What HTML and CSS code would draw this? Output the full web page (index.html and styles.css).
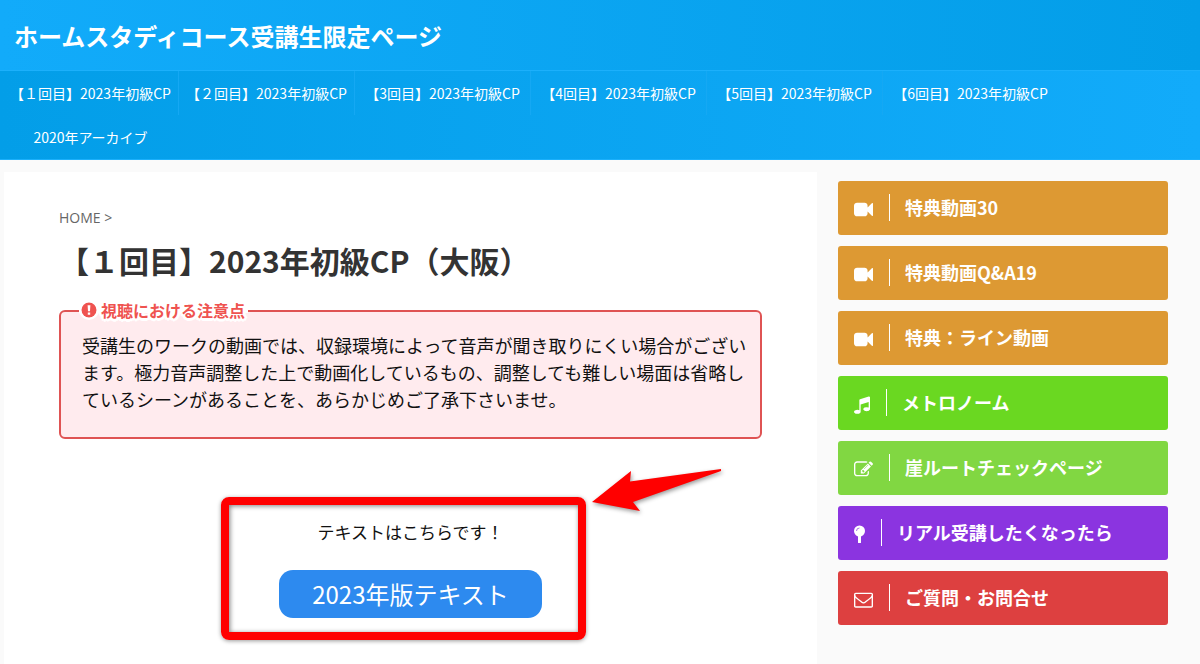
FILE: index.html
```html
<!DOCTYPE html>
<html lang="ja">

<head>
    <meta charset="utf-8">
    <meta content="width=device-width, initial-scale=1" name="viewport" />
    <title>ホームスタディコース受講生限定ページ</title>
    <link rel="stylesheet" href="styles.css">
</head>

<body>
    <!-- icons used more than once -->
    <svg class="sprite" aria-hidden="true">
        <symbol id="video" viewBox="0 0 1792 1792">
            <path d="M1792 352v1088q0 42-39 59-13 5-25 5-27 0-45-19l-403-403v166q0 119-84.5 203.5t-203.5 84.5h-704q-119 0-203.5-84.5t-84.5-203.5v-704q0-119 84.5-203.5t203.5-84.5h704q119 0 203.5 84.5t84.5 203.5v165l403-402q18-19 45-19 12 0 25 5 39 17 39 59z" />
        </symbol>
    </svg>

    <header class="header">
        <a class="site-title" href="#">ホームスタディコース受講生限定ページ</a>
    </header>

    <nav class="nav">
        <ul class="menu">
            <li><a href="#">【１回目】2023年初級CP</a></li>
            <li><a href="#">【２回目】2023年初級CP</a></li>
            <li><a href="#">【3回目】2023年初級CP</a></li>
            <li><a href="#">【4回目】2023年初級CP</a></li>
            <li><a href="#">【5回目】2023年初級CP</a></li>
            <li><a href="#">【6回目】2023年初級CP</a></li>
            <li><a href="#">2020年アーカイブ</a></li>
        </ul>
    </nav>

    <div class="container">
        <main class="main">
            <div class="breadcrumb"><a href="#">HOME</a> &gt;</div>
            <h1>【１回目】2023年初級CP（大阪）</h1>

            <section class="notice">
                <h2 class="notice-title">
                    <svg class="notice-icon" viewBox="0 0 16 16" aria-hidden="true">
                        <circle cx="8" cy="8" r="7.500" />
                        <path d="M6.6 3.2h2.8l-.4 6h-2zM6.8 10.4h2.4v2.3H6.8z" fill="#fff" />
                    </svg>
                    視聴における注意点
                </h2>
                <p>受講生のワークの動画では、収録環境によって音声が聞き取りにくい場合がございます。極力音声調整した上で動画化しているもの、調整しても難しい場面は省略しているシーンがあることを、あらかじめご了承下さいませ。</p>
            </section>

            <section class="download">
                <p>テキストはこちらです！</p>
                <a class="download-btn" href="#">2023年版テキスト</a>
                <div class="frame"></div>
                <svg class="arrow" viewBox="0 0 132 44" aria-hidden="true">
                    <path d="M1 34L40 3L39 13.500L130 1L130 3L42 34L49 43Z" />
                </svg>
            </section>
        </main>

        <aside class="sidebar">
            <a class="side-btn orange" href="#">
                <svg class="icon" aria-hidden="true"><use href="#video" /></svg>
                <span>特典動画30</span>
            </a>
            <a class="side-btn orange" href="#">
                <svg class="icon" aria-hidden="true"><use href="#video" /></svg>
                <span>特典動画Q&amp;A19</span>
            </a>
            <a class="side-btn orange" href="#">
                <svg class="icon" aria-hidden="true"><use href="#video" /></svg>
                <span>特典：ライン動画</span>
            </a>
            <a class="side-btn green" href="#">
                <svg class="icon icon-music" viewBox="128 0 1536 1792" aria-hidden="true">
                    <path d="M1664 224v1120q0 50-34 89t-86 60.5-103.5 32-96.5 10.5-96.5-10.5-103.5-32-86-60.5-34-89 34-89 86-60.5 103.5-32 96.5-10.5q105 0 192 39v-537l-768 237v709q0 50-34 89t-86 60.5-103.5 32-96.5 10.5-96.5-10.5-103.5-32-86-60.5-34-89 34-89 86-60.5 103.5-32 96.5-10.5q105 0 192 39v-967q0-31 19-56.5t49-35.5l832-256q12-4 28-4 40 0 68 28t28 68z" />
                </svg>
                <span>メトロノーム</span>
            </a>
            <a class="side-btn light-green" href="#">
                <svg class="icon" viewBox="0 0 1792 1792" aria-hidden="true">
                    <path d="M888 1184l116-116-152-152-116 116v56h96v96h56zm440-720q-16-16-33 1l-350 350q-17 17-1 33t33-1l350-350q17-17 1-33zm80 594v190q0 119-84.5 203.5t-203.5 84.5h-832q-119 0-203.5-84.5t-84.5-203.5v-832q0-119 84.5-203.5t203.5-84.5h832q63 0 117 25 15 7 18 23 3 17-9 29l-49 49q-14 14-32 8-23-6-45-6h-832q-66 0-113 47t-47 113v832q0 66 47 113t113 47h832q66 0 113-47t47-113v-126q0-13 9-22l64-64q15-15 35-7t20 29zm-96-738l288 288-672 672h-288v-288zm444 132l-92 92-288-288 92-92q28-28 68-28t68 28l152 152q28 28 28 68t-28 68z" />
                </svg>
                <span>崖ルートチェックページ</span>
            </a>
            <a class="side-btn purple" href="#">
                <svg class="icon icon-pin" viewBox="0 0 11 19" aria-hidden="true">
                    <circle cx="5.500" cy="6" r="5.500" />
                    <path d="M4 11h3v6.500a.5.5 0 0 1-.5.5h-2a.5.5 0 0 1-.5-.5z" />
                    <path class="shine" d="M2.500 6a3 3 0 0 1 3-3" />
                </svg>
                <span>リアル受講したくなったら</span>
            </a>
            <a class="side-btn red" href="#">
                <svg class="icon" viewBox="0 0 1792 1792" aria-hidden="true">
                    <path d="M1664 1504v-768q-32 36-69 66-268 206-426 338-51 43-83 67t-86.5 48.5-102.5 24.5h-2q-48 0-102.5-24.5t-86.5-48.5-83-67q-158-132-426-338-37-30-69-66v768q0 13 9.5 22.5t22.5 9.5h1472q13 0 22.5-9.5t9.5-22.5zm0-1051v-24.5l-.5-13-3-12.5-5.5-9-9-7.5-14-2.5h-1472q-13 0-22.5 9.5t-9.5 22.5q0 168 147 284 193 152 401 317 6 5 35 29.5t46 37.5 44.5 31.5 50.5 27.5 43 9h2q20 0 43-9t50.5-27.5 44.5-31.5 46-37.5 35-29.5q208-165 401-317 54-43 100.5-115.5t46.5-131.5zm128-37v1088q0 66-47 113t-113 47h-1472q-66 0-113-47t-47-113v-1088q0-66 47-113t113-47h1472q66 0 113 47t47 113z" />
                </svg>
                <span>ご質問・お問合せ</span>
            </a>
        </aside>
    </div>
</body>

</html>
```

FILE: styles.css
```css
* {
    box-sizing: border-box;
}

body {
    margin: 0;
    background-color: #fafafa;
    color: #111;
    font-family: "Noto Sans CJK JP", sans-serif;
    font-size: 16px;
}

a {
    color: inherit;
    text-decoration: none;
}

h1,
h2,
p,
ul {
    margin: 0;
    padding: 0;
}

.sprite {
    display: none;
}

/* header */
.header {
    padding: 18px 14px 16px;
    background: linear-gradient(to right, #12abfa, #039ee8);
    color: #fff;
}

.site-title {
    display: block;
    font-size: 24px;
    font-weight: bold;
    line-height: 36px;
}

.nav {
    border-top: 1px solid #1cb0fb;
    border-bottom: 1px solid #1cb0fb;
    background: linear-gradient(to right, #039ee8, #12abfa);
    color: #fff;
}

.menu {
    display: flex;
    flex-wrap: wrap;
    padding-left: 3px;
    list-style: none;
}

.menu li {
    width: 176px;
    border-right: 1px solid #15a8f3;
    font-size: 14px;
    line-height: 44px;
    text-align: center;
    white-space: nowrap;
}

.menu li:nth-child(n+6) {
    border-right-color: transparent;
}

.menu a {
    display: block;
}

/* two columns */
.container {
    display: flex;
    gap: 21px;
    padding: 12px 32px 0 4px;
}

.main {
    flex: 1;
    min-width: 0;
    min-height: calc(100vh - 172px);
    padding: 36px 55px 24px;
    background-color: #fff;
}

.breadcrumb {
    color: #666;
    font-family: "Open Sans", sans-serif;
    font-size: 14px;
    line-height: 20px;
}

h1 {
    margin-top: 12px;
    color: #333;
    font-size: 30px;
    line-height: 40px;
}

/* notice box, its title sits on the top border */
.notice {
    position: relative;
    margin-top: 30px;
    padding: 20px 10px 24px 21px;
    border: 2px solid #df5353;
    border-radius: 6px;
    background-color: #ffebee;
    font-size: 18px;
    line-height: 27px;
}

.notice-title {
    position: absolute;
    top: -15px;
    left: 18px;
    display: flex;
    align-items: center;
    gap: 4px;
    padding: 0 3px 0 2px;
    background: linear-gradient(#fff, #fff) 0 10px / 100% 6px no-repeat;
    color: #ef5350;
    font-size: 16px;
    line-height: 26px;
    text-shadow: 2px 2px #fff, -2px 2px #fff, 2px -2px #fff, -2px -2px #fff, 0 3px #fff, 3px 0 #fff, -3px 0 #fff;
}

.notice-icon {
    width: 16px;
    height: 16px;
    border-radius: 50%;
    box-shadow: 0 0 0 2px #fff;
    background-color: #fff;
    fill: #ef5350;
}

/* text download */
.download {
    position: relative;
    display: flex;
    flex-direction: column;
    align-items: center;
    gap: 24px;
    margin-top: 58px;
    padding: 21px 0 22px;
    font-size: 17px;
    line-height: 28px;
}

.download-btn {
    padding: 0 33px;
    border-radius: 14px;
    background-color: #2d8aef;
    color: #fff;
    font-size: 24px;
    line-height: 48px;
}

.frame {
    position: absolute;
    top: 0;
    bottom: 0;
    left: calc(50% - 190px);
    width: 365px;
    border: 8px solid #f00;
    border-radius: 8px;
    box-shadow: 0 1px 4px rgba(0, 0, 0, 0.4), inset 1px 1px 5px rgba(0, 0, 0, 0.5);
    pointer-events: none;
}

.arrow {
    position: absolute;
    top: -29px;
    left: calc(50% + 180px);
    width: 132px;
    height: 44px;
    overflow: visible;
    fill: #f00;
    filter: drop-shadow(1px 2px 2px rgba(0, 0, 0, 0.4));
}

/* sidebar */
.sidebar {
    display: flex;
    flex: 0 0 330px;
    flex-direction: column;
    gap: 11px;
    padding-top: 9px;
}

.side-btn {
    display: flex;
    align-items: center;
    gap: 16px;
    padding: 13px 16px 14px;
    border-radius: 3px;
    color: #fff;
    font-size: 18px;
    font-weight: bold;
    line-height: 27px;
}

.side-btn span {
    padding-left: 15px;
    border-left: 1px solid #fff;
}

.icon {
    width: 19px;
    height: 19px;
    margin-top: 3px;
    fill: #fff;
}

.icon-music {
    width: 16px;
}

.icon-pin {
    width: 11px;
}

.shine {
    fill: none;
    stroke: #8b34e0;
    stroke-width: 0.7;
}

.orange {
    background-color: #dd9933;
}

.green {
    background-color: #6ad821;
}

.light-green {
    background-color: #81d742;
}

.purple {
    background-color: #8b34e0;
}

.red {
    background-color: #dd4040;
}

@media (max-width: 900px) {
    .container {
        flex-direction: column;
        padding-right: 4px;
    }
}
```
